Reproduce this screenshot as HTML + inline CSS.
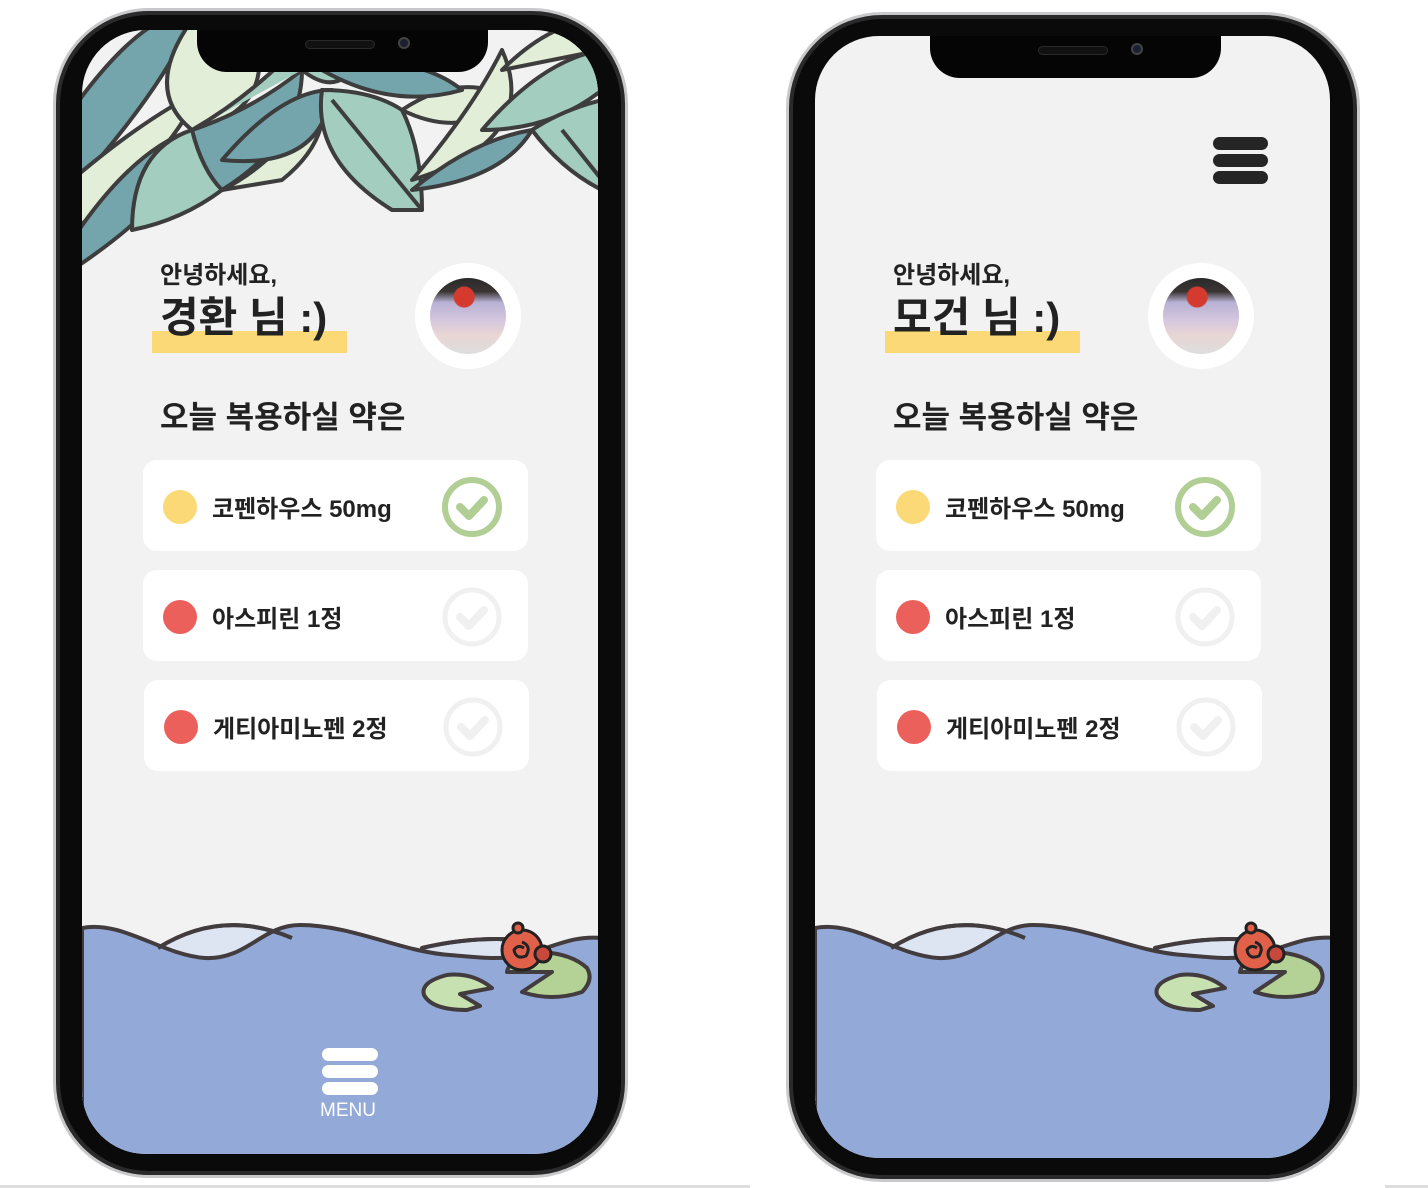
<!DOCTYPE html>
<html><head><meta charset="utf-8"><style>
*{margin:0;padding:0;box-sizing:border-box}
body{width:1428px;height:1188px;background:#fff;position:relative;overflow:hidden;font-family:"Liberation Sans","Noto Sans CJK KR",sans-serif}
.phone{position:absolute;width:575px;height:1170px;border-radius:96px;background:#0a0a0a;border:3px solid #c9c9cc;box-shadow:inset 0 0 0 4px #2a2a2a}
.screen{position:absolute;overflow:hidden;border-radius:64px;background:#f2f2f2;width:516px;height:1124px}
.in{position:absolute;left:0;width:516px;height:1140px}
.notch{position:absolute;left:115px;top:0;width:291px;height:42px;background:#050505;border-radius:0 0 30px 30px}
.spk{position:absolute;left:108px;top:10px;width:70px;height:9px;border-radius:5px;background:#111;border:1px solid #2a2a2a}
.cam{position:absolute;left:201px;top:7px;width:12px;height:12px;border-radius:50%;background:#1a2030;border:2px solid #444}
.hi{position:absolute;left:78px;top:225px;font-size:24px;font-weight:bold;color:#222}
.bar{position:absolute;left:70px;top:301px;width:195px;height:22px;background:#fbd977}
.name{position:absolute;left:78px;top:254px;font-size:42px;font-weight:bold;color:#222}
.av{position:absolute;left:333px;top:233px;width:106px;height:106px;border-radius:50%;background:#fff}
.av div{position:absolute;left:15px;top:15px;width:76px;height:76px;border-radius:50%;background:radial-gradient(circle at 45% 25%,#d43a2e 0 10px,transparent 11px),linear-gradient(180deg,#2a2a2a 0,#3a3533 18%,#b7b1d4 32%,#d4c6de 55%,#e8d6d4 75%,#ddd 100%)}
.title{position:absolute;left:78px;top:362px;font-size:31px;font-weight:bold;color:#222}
.card{position:absolute;left:61px;width:385px;height:91px;background:#fff;border-radius:14px}
.dot{position:absolute;left:20px;top:30px;width:34px;height:34px;border-radius:50%}
.ct{position:absolute;left:69px;top:29px;font-size:24px;font-weight:bold;color:#222}
.chk{position:absolute;left:298px;top:16px}
.menu{position:absolute;left:240px;top:1018px;width:56px}
.menu i{display:block;height:13px;border-radius:7px;background:#fff;margin-bottom:4px}
.menu span{display:block;color:#fff;font-size:19px;text-align:center;margin-left:-4px;margin-top:5px}
.ham{position:absolute;left:398px;top:107px;width:55px}
.ham i{display:block;height:13px;border-radius:7px;background:#252525;margin-bottom:4px}
</style></head><body>

<!-- LEFT PHONE -->
<div class="phone" style="left:53px;top:8px"></div>
<div class="screen" style="left:82px;top:30px">
<div class="in" style="top:0">
<svg width="516" height="260" style="position:absolute;left:0;top:0" stroke="#3d3d3d" stroke-width="4" stroke-linejoin="round">
<path d="M-10,80 Q40,10 80,-10 L110,-10 Q80,60 -10,160Z" fill="#74a5ad"/>
<path d="M-10,150 Q60,90 120,60 Q70,150 -10,200Z" fill="#e3eed9"/>
<path d="M-10,210 Q50,120 110,100 Q110,160 -10,240Z" fill="#74a5ad"/>
<path d="M110,-10 L170,-10 Q200,80 110,100 Q60,60 110,-10Z" fill="#e3eed9"/>
<path d="M50,200 Q50,120 110,100 Q150,130 140,160 Q100,190 50,200Z" fill="#a3cdbf"/>
<path d="M110,100 Q170,80 220,40 Q220,110 140,160 Q120,140 110,100Z" fill="#74a5ad"/>
<path d="M140,160 Q200,130 240,60 Q250,110 200,150Z" fill="#e3eed9"/>
<path d="M110,100 Q180,60 240,-10 L290,-10 Q270,80 220,40" fill="#a3cdbf"/>
<path d="M140,130 Q240,140 250,60 Q200,60 140,130Z" fill="#74a5ad"/>
<path d="M240,60 Q230,130 310,180 L340,180 Q340,120 320,80 Q290,60 240,60Z" fill="#a3cdbf"/>
<path d="M250,70 L340,180" fill="none"/>
<path d="M320,80 Q380,110 430,70 Q380,40 320,80Z" fill="#e3eed9"/>
<path d="M240,40 Q310,80 380,60 Q330,20 240,40Z" fill="#74a5ad"/>
<path d="M330,150 Q390,80 420,20 Q460,110 330,150Z" fill="#e3eed9"/>
<path d="M330,160 Q420,150 450,100 Q390,110 330,160Z" fill="#74a5ad"/>
<path d="M400,100 Q460,30 520,20 L520,60 Q470,100 400,100Z" fill="#a3cdbf"/>
<path d="M420,40 Q470,-10 520,-10 L520,20 Q470,30 420,40Z" fill="#e3eed9"/>
<path d="M450,100 Q480,140 520,160 L520,70 Q480,80 450,100Z" fill="#a3cdbf"/>
<path d="M480,100 L520,150" fill="none"/>
</svg>
<div class="notch"><div class="spk"></div><div class="cam"></div></div>
<div class="hi">안녕하세요,</div>
<div class="bar"></div>
<div class="name">경환 님 :)</div>
<div class="av"><div></div></div>
<div class="title">오늘 복용하실 약은</div>
<div class="card" style="top:430px"><div class="dot" style="background:#fbd977"></div><div class="ct">코펜하우스 50mg</div>
<svg class="chk" width="62" height="62"><circle cx="31" cy="31" r="27" fill="none" stroke="#b1cf94" stroke-width="6"/><path d="M19,31 L28,40 L43,24" fill="none" stroke="#b1cf94" stroke-width="8" stroke-linecap="round" stroke-linejoin="round"/></svg></div>
<div class="card" style="top:540px"><div class="dot" style="background:#ec605c"></div><div class="ct">아스피린 1정</div>
<svg class="chk" width="62" height="62"><circle cx="31" cy="31" r="27" fill="none" stroke="#f0f0f0" stroke-width="5"/><path d="M19,31 L28,40 L43,24" fill="none" stroke="#f0f0f0" stroke-width="8" stroke-linecap="round" stroke-linejoin="round"/></svg></div>
<div class="card" style="top:650px;left:62px"><div class="dot" style="background:#ec605c"></div><div class="ct">게티아미노펜 2정</div>
<svg class="chk" width="62" height="62"><circle cx="31" cy="31" r="27" fill="none" stroke="#f0f0f0" stroke-width="5"/><path d="M19,31 L28,40 L43,24" fill="none" stroke="#f0f0f0" stroke-width="8" stroke-linecap="round" stroke-linejoin="round"/></svg></div>
<svg width="516" height="260" style="position:absolute;left:0;top:880px" stroke="#433c3e" stroke-width="4" stroke-linejoin="round">
<path d="M76,38 Q140,-2 210,28 L210,70 L76,70Z" fill="#dde5f3"/>
<path d="M340,38 Q390,26 440,30 L440,70 L340,70Z" fill="#dde5f3"/>
<path d="M0,18 C40,10 80,45 123,48 C165,50 180,15 218,15 C270,15 320,42 368,45 C400,48 420,50 440,45 C470,38 490,25 520,28 L520,260 L0,260Z" fill="#93a9d8"/>
<path d="M76,38 Q140,-2 210,28" fill="none"/>
<path d="M340,38 Q390,26 440,30" fill="none"/>
<path d="M425,62 L470,62 L440,82 Q470,92 500,82 Q512,70 505,58 Q490,44 460,42 Q428,46 425,62Z" fill="#b4d295"/>
<path d="M410,78 Q390,62 365,65 Q338,72 342,85 Q350,100 385,100 L398,96 L378,84 Z" fill="#c8e1b1"/>
<circle cx="440" cy="40" r="20" fill="#e0604a" stroke="#222" stroke-width="3"/>
<path d="M440,32 Q450,36 444,46 Q434,50 432,40 Q436,34 442,38" fill="none" stroke="#222" stroke-width="3"/>
<circle cx="436" cy="18" r="5" fill="#e0604a" stroke="#222" stroke-width="3"/>
<circle cx="461" cy="44" r="8" fill="#c9483c" stroke="#222" stroke-width="3"/>
</svg>
<div class="menu"><i></i><i></i><i></i><span>MENU</span></div>
</div></div>

<!-- RIGHT PHONE -->
<div class="phone" style="left:786px;top:12px;width:574px"></div>
<div class="screen" style="left:815px;top:36px;width:515px;height:1122px">
<div class="in" style="top:-6px">
<div class="notch" style="top:6px;left:115px;height:42px"><div class="spk"></div><div class="cam"></div></div>
<div class="ham"><i></i><i></i><i></i></div>
<div class="hi">안녕하세요,</div>
<div class="bar"></div>
<div class="name">모건 님 :)</div>
<div class="av"><div></div></div>
<div class="title">오늘 복용하실 약은</div>
<div class="card" style="top:430px"><div class="dot" style="background:#fbd977"></div><div class="ct">코펜하우스 50mg</div>
<svg class="chk" width="62" height="62"><circle cx="31" cy="31" r="27" fill="none" stroke="#b1cf94" stroke-width="6"/><path d="M19,31 L28,40 L43,24" fill="none" stroke="#b1cf94" stroke-width="8" stroke-linecap="round" stroke-linejoin="round"/></svg></div>
<div class="card" style="top:540px"><div class="dot" style="background:#ec605c"></div><div class="ct">아스피린 1정</div>
<svg class="chk" width="62" height="62"><circle cx="31" cy="31" r="27" fill="none" stroke="#f0f0f0" stroke-width="5"/><path d="M19,31 L28,40 L43,24" fill="none" stroke="#f0f0f0" stroke-width="8" stroke-linecap="round" stroke-linejoin="round"/></svg></div>
<div class="card" style="top:650px;left:62px"><div class="dot" style="background:#ec605c"></div><div class="ct">게티아미노펜 2정</div>
<svg class="chk" width="62" height="62"><circle cx="31" cy="31" r="27" fill="none" stroke="#f0f0f0" stroke-width="5"/><path d="M19,31 L28,40 L43,24" fill="none" stroke="#f0f0f0" stroke-width="8" stroke-linecap="round" stroke-linejoin="round"/></svg></div>
<svg width="516" height="260" style="position:absolute;left:0;top:880px" stroke="#433c3e" stroke-width="4" stroke-linejoin="round">
<path d="M76,38 Q140,-2 210,28 L210,70 L76,70Z" fill="#dde5f3"/>
<path d="M340,38 Q390,26 440,30 L440,70 L340,70Z" fill="#dde5f3"/>
<path d="M0,18 C40,10 80,45 123,48 C165,50 180,15 218,15 C270,15 320,42 368,45 C400,48 420,50 440,45 C470,38 490,25 520,28 L520,260 L0,260Z" fill="#93a9d8"/>
<path d="M76,38 Q140,-2 210,28" fill="none"/>
<path d="M340,38 Q390,26 440,30" fill="none"/>
<path d="M425,62 L470,62 L440,82 Q470,92 500,82 Q512,70 505,58 Q490,44 460,42 Q428,46 425,62Z" fill="#b4d295"/>
<path d="M410,78 Q390,62 365,65 Q338,72 342,85 Q350,100 385,100 L398,96 L378,84 Z" fill="#c8e1b1"/>
<circle cx="440" cy="40" r="20" fill="#e0604a" stroke="#222" stroke-width="3"/>
<path d="M440,32 Q450,36 444,46 Q434,50 432,40 Q436,34 442,38" fill="none" stroke="#222" stroke-width="3"/>
<circle cx="436" cy="18" r="5" fill="#e0604a" stroke="#222" stroke-width="3"/>
<circle cx="461" cy="44" r="8" fill="#c9483c" stroke="#222" stroke-width="3"/>
</svg>
</div></div>
<div style="position:absolute;left:0;top:1185px;width:750px;height:3px;background:#ddd"></div>
<div style="position:absolute;left:1385px;top:1185px;width:43px;height:3px;background:#ddd"></div>
</body></html>
